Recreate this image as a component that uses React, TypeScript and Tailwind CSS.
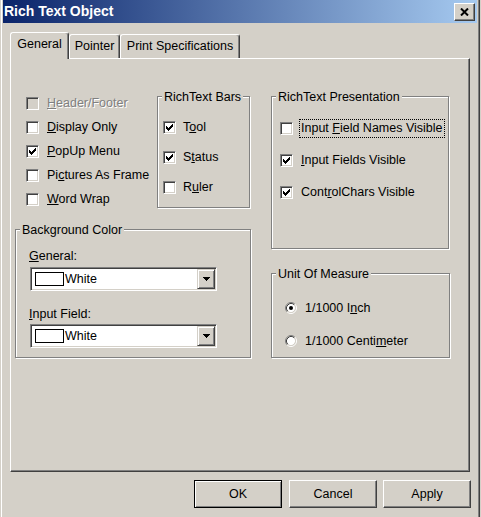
import type { ReactNode } from 'react';

const SUNKEN =
  'border border-t-[#808080] border-l-[#808080] border-r-white border-b-white shadow-[inset_1px_1px_0_#404040,inset_-1px_-1px_0_#d4d0c8]';
const RAISED =
  'border border-t-white border-l-white border-r-[#404040] border-b-[#404040] shadow-[inset_-1px_-1px_0_#808080]';

// classic 7x7 check glyph, one 3px column per x
const CHECK_COLS = [2, 3, 4, 3, 2, 1, 0];

function CheckBox({ checked, disabled }: { checked?: boolean; disabled?: boolean }) {
  return (
    <div
      className={`flex h-[13px] w-[13px] shrink-0 items-center justify-center ${SUNKEN} ${
        disabled ? 'bg-[#d4d0c8]' : 'bg-white'
      }`}
    >
      {checked ? (
        <svg width="7" height="7" viewBox="0 0 7 7" shapeRendering="crispEdges">
          {CHECK_COLS.map((y, x) => (
            <rect key={x} x={x} y={y} width="1" height="3" fill="#000" />
          ))}
        </svg>
      ) : null}
    </div>
  );
}

function Radio({ checked }: { checked?: boolean }) {
  return (
    <svg width="12" height="12" viewBox="0 0 12 12" className="shrink-0">
      <circle cx="6" cy="6" r="4.2" fill="#fff" />
      <path d="M2.11 9.89 A5.5 5.5 0 0 1 9.89 2.11" stroke="#808080" fill="none" />
      <path d="M9.89 2.11 A5.5 5.5 0 0 1 2.11 9.89" stroke="#fff" fill="none" />
      <path d="M2.82 9.18 A4.5 4.5 0 0 1 9.18 2.82" stroke="#404040" fill="none" />
      <path d="M9.18 2.82 A4.5 4.5 0 0 1 2.82 9.18" stroke="#d4d0c8" fill="none" />
      {checked ? <circle cx="6" cy="6" r="2" fill="#000" /> : null}
    </svg>
  );
}

function CheckRow({
  label,
  checked,
  disabled,
  focus,
  gap = 'gap-[8px]',
}: {
  label: ReactNode;
  checked?: boolean;
  disabled?: boolean;
  focus?: boolean;
  gap?: string;
}) {
  return (
    <div className={`flex h-[13px] items-center ${gap}`}>
      <CheckBox checked={checked} disabled={disabled} />
      <span
        className={`whitespace-nowrap leading-[13px] ${
          disabled ? 'text-[#808080] [text-shadow:1px_1px_0_#fff]' : ''
        } ${focus ? '-ml-[2px] border border-dotted border-black px-px py-[2px]' : ''}`}
      >
        {label}
      </span>
    </div>
  );
}

function RadioRow({ label, checked }: { label: ReactNode; checked?: boolean }) {
  return (
    <div className="flex h-[12px] items-center gap-[8px]">
      <Radio checked={checked} />
      <span className="whitespace-nowrap leading-[13px]">{label}</span>
    </div>
  );
}

function Group({ title, className, children }: { title: string; className: string; children?: ReactNode }) {
  return (
    <div
      className={`relative border border-[#808080] shadow-[inset_1px_1px_0_#fff,1px_1px_0_#fff] ${className}`}
    >
      <span className="absolute -top-[6px] left-[4px] whitespace-nowrap bg-[#d4d0c8] px-[2px] leading-[13px]">
        {title}
      </span>
      {children}
    </div>
  );
}

function Combo({ value }: { value: string }) {
  return (
    <div className={`ml-px mt-[4px] flex h-[24px] w-[187px] bg-white p-px ${SUNKEN}`}>
      <div className="flex flex-1 items-center pl-[3px]">
        <div className="h-[14px] w-[29px] border border-black bg-white" />
        <span className="ml-px leading-[13px]">{value}</span>
      </div>
      <div
        className="flex h-full w-[18px] items-center justify-center border border-t-[#d4d0c8] border-l-[#d4d0c8] border-r-[#404040] border-b-[#404040] bg-[#d4d0c8] shadow-[inset_1px_1px_0_#fff,inset_-1px_-1px_0_#808080]"
      >
        <svg width="7" height="4" viewBox="0 0 7 4" shapeRendering="crispEdges">
          <rect x="0" y="0" width="7" height="1" fill="#000" />
          <rect x="1" y="1" width="5" height="1" fill="#000" />
          <rect x="2" y="2" width="3" height="1" fill="#000" />
          <rect x="3" y="3" width="1" height="1" fill="#000" />
        </svg>
      </div>
    </div>
  );
}

function DialogButton({ label, isDefault }: { label: string; isDefault?: boolean }) {
  const cls = isDefault
    ? 'border border-black shadow-[inset_1px_1px_0_#fff,inset_-1px_-1px_0_#808080]'
    : RAISED;
  return (
    <div className={`flex h-[28px] w-[88px] items-center justify-center bg-[#d4d0c8] leading-[13px] ${cls}`}>
      {label}
    </div>
  );
}

export default function App() {
  return (
    <div className="h-[517px] w-[481px] overflow-hidden bg-[#d4d0c8] font-['Liberation_Sans',Arial,sans-serif] text-[12.5px] text-black">
      <div className="ml-px flex h-full w-[479px] flex-col border-l border-r border-l-white border-r-[#404040] pl-px pr-[2px] shadow-[inset_-1px_0_0_#808080]">
        {/* title bar */}
        <div className="flex h-[23px] shrink-0 items-center justify-between bg-[linear-gradient(to_right,#0a246a,#a6caf0)] pl-px pr-[2px]">
          <span className="text-[14px] font-bold leading-[23px] text-white">Rich Text Object</span>
          <div className={`flex h-[18px] w-[21px] items-center justify-center bg-[#d4d0c8] ${RAISED}`}>
            <svg width="9" height="8" viewBox="0 0 9 8">
              <path d="M1 0.5L8 7.5M8 0.5L1 7.5" stroke="#000" strokeWidth="2" />
            </svg>
          </div>
        </div>

        <div className="flex flex-col pl-[7px] pt-[9px]">
          {/* tabs */}
          <div className="flex h-[26px] items-end">
            <div className="relative z-10 -mb-px flex h-[27px] w-[59px] items-center justify-center rounded-t-[3px] border-l border-r border-t border-l-white border-r-[#404040] border-t-white bg-[#d4d0c8] pb-[3px] leading-[13px] shadow-[inset_-1px_0_0_#808080]">
              General
            </div>
            <div className="flex h-[24px] w-[51px] items-center justify-center rounded-t-[3px] border-l border-r border-t border-l-white border-r-[#404040] border-t-white leading-[13px] shadow-[inset_-1px_0_0_#808080]">
              Pointer
            </div>
            <div className="flex h-[24px] w-[120px] items-center justify-center rounded-t-[3px] border-l border-r border-t border-l-white border-r-[#404040] border-t-white leading-[13px] shadow-[inset_-1px_0_0_#808080]">
              Print Specifications
            </div>
          </div>

          {/* tab page */}
          <div className={`flex h-[414px] w-[460px] pl-[4px] pt-[37px] ${RAISED}`}>
            <div className="flex w-[237px] flex-col">
              <div className="flex h-[112px]">
                <div className="ml-[11px] flex w-[131px] flex-col gap-[11px] pt-px">
                  <CheckRow
                    disabled
                    label={
                      <>
                        <u>H</u>eader/Footer
                      </>
                    }
                  />
                  <CheckRow
                    label={
                      <>
                        <u>D</u>isplay Only
                      </>
                    }
                  />
                  <CheckRow
                    checked
                    label={
                      <>
                        <u>P</u>opUp Menu
                      </>
                    }
                  />
                  <CheckRow
                    label={
                      <>
                        Pi<u>c</u>tures As Frame
                      </>
                    }
                  />
                  <CheckRow
                    label={
                      <>
                        <u>W</u>ord Wrap
                      </>
                    }
                  />
                </div>
                <Group title="RichText Bars" className="h-[112px] w-[93px]">
                  <div className="flex flex-col gap-[17px] pl-[5px] pt-[24px]">
                    <CheckRow
                      checked
                      gap="gap-[7px]"
                      label={
                        <>
                          T<u>o</u>ol
                        </>
                      }
                    />
                    <CheckRow
                      checked
                      gap="gap-[7px]"
                      label={
                        <>
                          S<u>t</u>atus
                        </>
                      }
                    />
                    <CheckRow
                      gap="gap-[7px]"
                      label={
                        <>
                          R<u>u</u>ler
                        </>
                      }
                    />
                  </div>
                </Group>
              </div>

              <Group title="Background Color" className="mt-[21px] h-[129px] w-[236px]">
                <div className="flex flex-col pl-[13px] pt-[20px]">
                  <span className="leading-[13px]">
                    <u>G</u>eneral:
                  </span>
                  <Combo value="White" />
                  <span className="mt-[17px] leading-[13px]">
                    <u>I</u>nput Field:
                  </span>
                  <div className="-mt-px">
                    <Combo value="White" />
                  </div>
                </div>
              </Group>
            </div>

            <div className="ml-[19px] flex w-[179px] flex-col">
              <Group title="RichText Presentation" className="h-[153px] w-[178px]">
                <div className="flex flex-col gap-[19px] pl-[8px] pt-[25px]">
                  <CheckRow
                    focus
                    label={
                      <>
                        Input <u>F</u>ield Names Visible
                      </>
                    }
                  />
                  <CheckRow
                    checked
                    label={
                      <>
                        <u>I</u>nput Fields Visible
                      </>
                    }
                  />
                  <CheckRow
                    checked
                    label={
                      <>
                        Cont<u>r</u>olChars Visible
                      </>
                    }
                  />
                </div>
              </Group>
              <Group title="Unit Of Measure" className="mt-[24px] h-[85px] w-[179px]">
                <div className="flex flex-col gap-[21px] pl-[13px] pt-[28px]">
                  <RadioRow
                    checked
                    label={
                      <>
                        1/1000 I<u>n</u>ch
                      </>
                    }
                  />
                  <RadioRow
                    label={
                      <>
                        1/1000 Centi<u>m</u>eter
                      </>
                    }
                  />
                </div>
              </Group>
            </div>
          </div>

          {/* buttons */}
          <div className="mr-[6px] mt-[8px] flex justify-end gap-[6px]">
            <div className="mr-px">
              <DialogButton label="OK" isDefault />
            </div>
            <DialogButton label="Cancel" />
            <DialogButton label="Apply" />
          </div>
        </div>
      </div>
    </div>
  );
}
